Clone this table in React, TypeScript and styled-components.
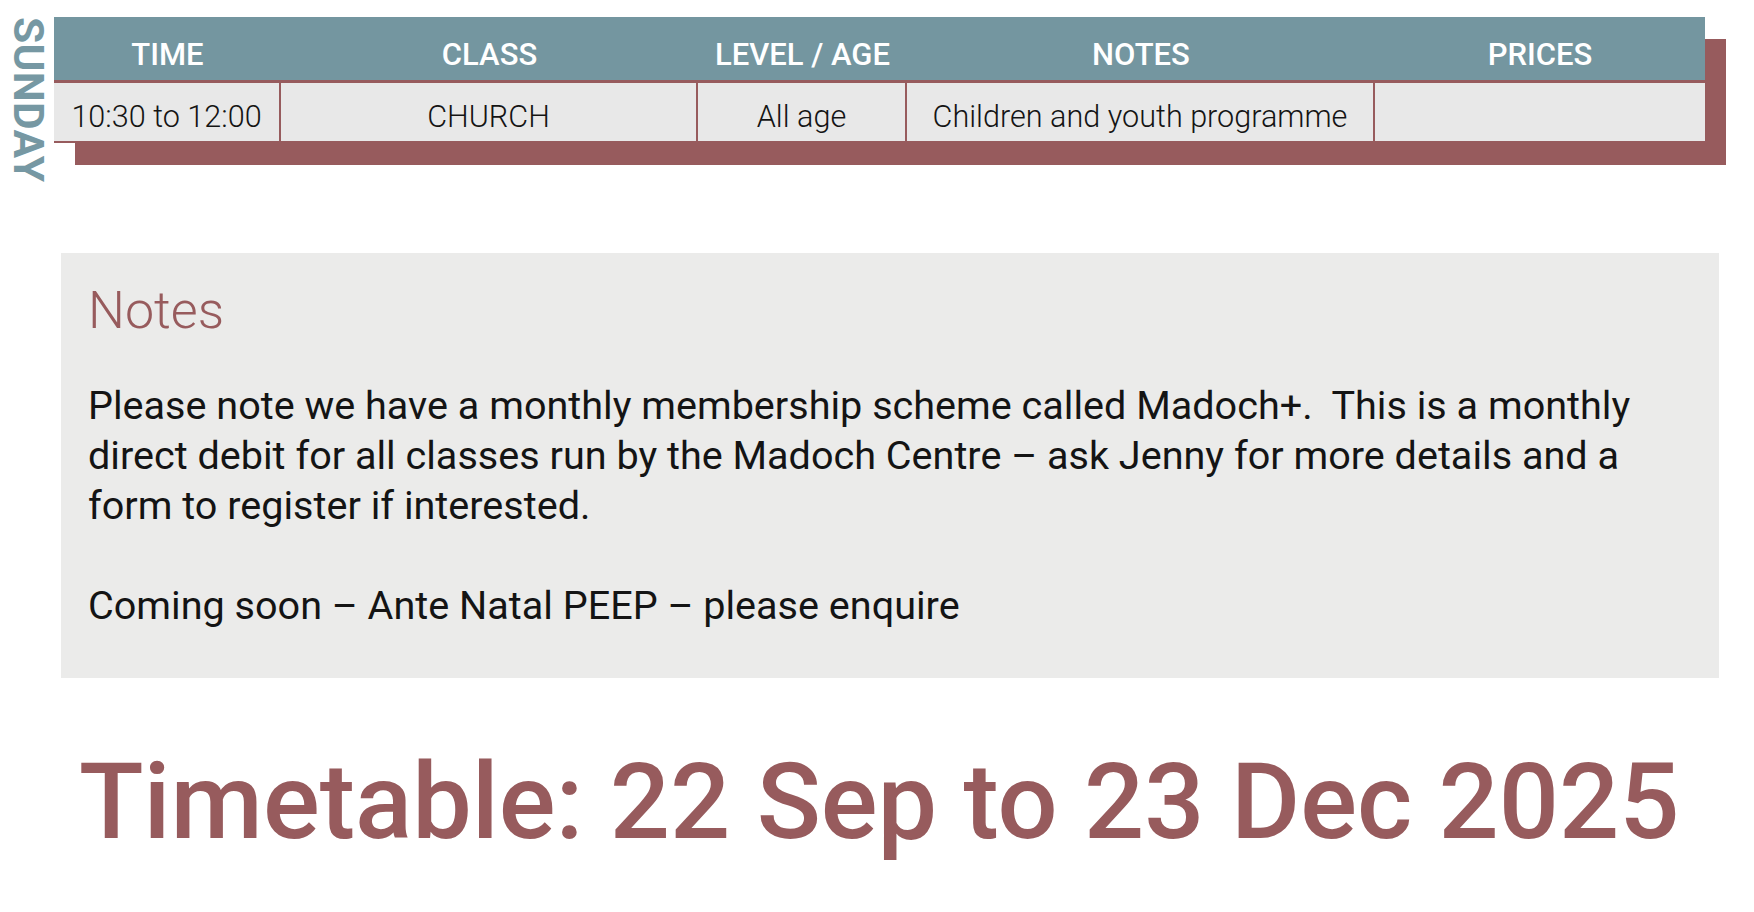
import React from 'react';
import styled, { createGlobalStyle } from 'styled-components';

const palette = {
    teal: '#7496a0',
    tealText: '#7698a3',
    red: '#975b5d',
    cell: '#e8e8e8',
    panel: '#ebebea',
    ink: '#141414',
};

type Column = { title: string; width: number; value: string };

const columns: Column[] = [
    { title: 'TIME', width: 227, value: '10:30 to 12:00' },
    { title: 'CLASS', width: 417, value: 'CHURCH' },
    { title: 'LEVEL / AGE', width: 209, value: 'All age' },
    { title: 'NOTES', width: 468, value: 'Children and youth programme' },
    { title: 'PRICES', width: 330, value: '' },
];

const GlobalStyle = createGlobalStyle`
    html, body {
        margin: 0;
        padding: 0;
        background: #ffffff;
    }
    body {
        font-family: Roboto, "Liberation Sans", sans-serif;
        color: ${palette.ink};
    }
`;

export default function App() {
    const template = columns.map((c) => `${c.width}px`).join(' ');

    return (
        <>
            <GlobalStyle />
            <Page>
                <DayRow>
                    <DayLabel>SUNDAY</DayLabel>
                    <Table $template={template}>
                        {columns.map((c) => (
                            <HeadCell key={c.title}>{c.title}</HeadCell>
                        ))}
                        {columns.map((c, index) => (
                            <BodyCell key={c.title} $last={index === columns.length - 1}>
                                {c.value}
                            </BodyCell>
                        ))}
                    </Table>
                </DayRow>

                <NotesPanel>
                    <NotesHeading>Notes</NotesHeading>
                    <NotesText>
                        Please note we have a monthly membership scheme called Madoch+.&nbsp; This is a monthly
                        <br />
                        direct debit for all classes run by the Madoch Centre – ask Jenny for more details and a
                        <br />
                        form to register if interested.
                    </NotesText>
                    <NotesText $gap>Coming soon – Ante Natal PEEP – please enquire</NotesText>
                </NotesPanel>

                <Title>Timetable: 22 Sep to 23 Dec 2025</Title>
            </Page>
        </>
    );
}

const Page = styled.div`
    width: 1754px;
    min-height: 912px;
    box-sizing: border-box;
    padding-top: 17px;
    display: flex;
    flex-direction: column;
`;

const DayRow = styled.div`
    display: flex;
    align-items: flex-start;
    padding-left: 7px;
    gap: 5px;
    height: 166px;
`;

const DayLabel = styled.div`
    writing-mode: vertical-rl;
    font-size: 42.5px;
    font-weight: 700;
    line-height: 42px;
    width: 42px;
    color: ${palette.tealText};
    letter-spacing: 0.3px;
`;

const Table = styled.div<{ $template: string }>`
    display: grid;
    grid-template-columns: ${(p) => p.$template};
    grid-template-rows: 66px 58px;
    border-bottom: 2px solid ${palette.red};
    box-shadow: 21px 22px 0 ${palette.red};
    background: ${palette.cell};
`;

const HeadCell = styled.div`
    background: ${palette.teal};
    color: #ffffff;
    font-size: 31px;
    font-weight: 500;
    display: flex;
    justify-content: center;
    align-items: center;
    padding-top: 12px;
    box-sizing: border-box;
    border-bottom: 3px solid ${palette.red};
`;

const BodyCell = styled.div<{ $last?: boolean }>`
    background: ${palette.cell};
    font-size: 30.6px;
    font-weight: 300;
    color: ${palette.ink};
    display: flex;
    justify-content: center;
    align-items: center;
    padding-top: 9px;
    box-sizing: border-box;
    white-space: nowrap;
    border-right: ${(p) => (p.$last ? 'none' : `2px solid ${palette.red}`)};
`;

const NotesPanel = styled.section`
    margin: 70px 35px 0 61px;
    background: ${palette.panel};
    padding: 27px 27px 47px;
`;

const NotesHeading = styled.h2`
    margin: 0 0 39px;
    font-size: 52px;
    font-weight: 300;
    line-height: 1.2;
    color: ${palette.red};
`;

const NotesText = styled.p<{ $gap?: boolean }>`
    margin: ${(p) => (p.$gap ? '50px 0 0' : '0')};
    font-size: 39.6px;
    font-weight: 400;
    line-height: 50px;
    white-space: nowrap;
    color: ${palette.ink};
`;

const Title = styled.h1`
    margin: 61px 0 0 79px;
    font-size: 106px;
    font-weight: 500;
    line-height: 1.2;
    color: ${palette.red};
    white-space: nowrap;
`;
